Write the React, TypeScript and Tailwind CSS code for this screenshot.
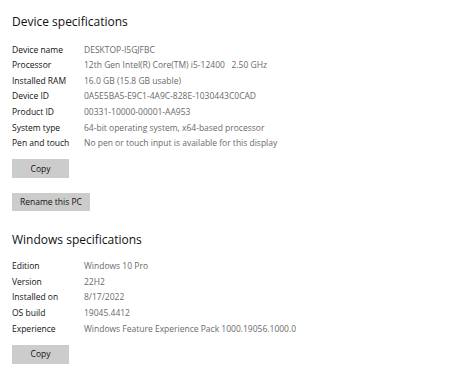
import React from 'react';

const font = { fontFamily: '"Open Sans", "Noto Sans", sans-serif' };

interface Spec {
  label: string;
  value: string;
}

const device: Spec[] = [
  { label: 'Device name', value: 'DESKTOP-I5GJFBC' },
  { label: 'Processor', value: '12th Gen Intel(R) Core(TM) i5-12400   2.50 GHz' },
  { label: 'Installed RAM', value: '16.0 GB (15.8 GB usable)' },
  { label: 'Device ID', value: '0A5E5BA5-E9C1-4A9C-828E-1030443C0CAD' },
  { label: 'Product ID', value: '00331-10000-00001-AA953' },
  { label: 'System type', value: '64-bit operating system, x64-based processor' },
  { label: 'Pen and touch', value: 'No pen or touch input is available for this display' },
];

const windows: Spec[] = [
  { label: 'Edition', value: 'Windows 10 Pro' },
  { label: 'Version', value: '22H2' },
  { label: 'Installed on', value: '8/17/2022' },
  { label: 'OS build', value: '19045.4412' },
  { label: 'Experience', value: 'Windows Feature Experience Pack 1000.19056.1000.0' },
];

const SpecTable: React.FC<{ rows: Spec[] }> = ({ rows }) => (
  <div className="flex flex-col">
    {rows.map((r) => (
      <div key={r.label} className="flex h-[15.65px] items-center text-[8.5px] leading-none">
        <span className="w-[72px] shrink-0 text-[#111111]">{r.label}</span>
        <span className="whitespace-pre text-[#6a6a6a]">{r.value}</span>
      </div>
    ))}
  </div>
);

const GrayButton: React.FC<{ children: React.ReactNode; className?: string }> = ({ children, className }) => (
  <button className={'block bg-[#cccccc] text-[8.5px] leading-none text-[#111111] ' + (className ?? '')}>
    {children}
  </button>
);

export default function App() {
  return (
    <div className="h-[374px] w-[450px] overflow-hidden bg-white pl-3" style={font}>
      <h2 className="pt-[14px] text-[12px] leading-4 font-normal text-[#111111]">Device specifications</h2>
      <div className="mt-[12px]">
        <SpecTable rows={device} />
      </div>
      <GrayButton className="mt-[8px] h-[19px] w-[57px]">Copy</GrayButton>
      <GrayButton className="mt-[15px] h-[18px] w-[78px]">Rename this PC</GrayButton>
      <h2 className="mt-[21px] text-[12px] leading-4 font-normal text-[#111111]">Windows specifications</h2>
      <div className="mt-[10px]">
        <SpecTable rows={windows} />
      </div>
      <GrayButton className="mt-[8px] h-[19px] w-[57px]">Copy</GrayButton>
    </div>
  );
}
